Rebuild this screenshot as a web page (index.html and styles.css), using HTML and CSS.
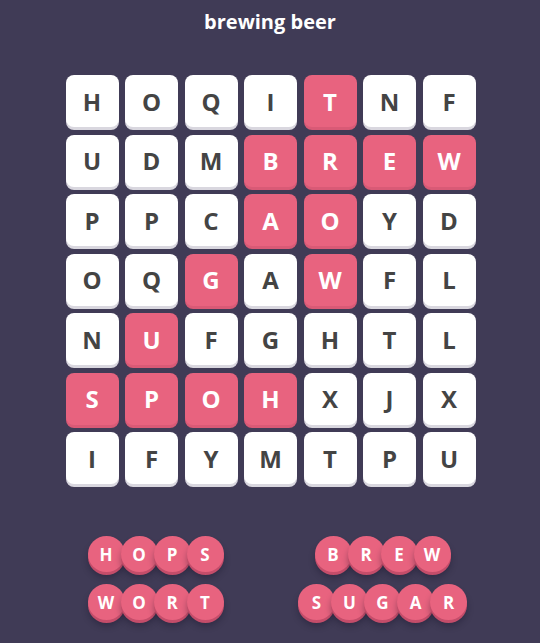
FILE: index.html
```html
<!DOCTYPE html>
<html lang="en">
  <head>
    <meta charset="UTF-8" />
    <meta name="viewport" content="width=device-width, initial-scale=1.0" />
    <title>Word Search</title>
    <link rel="stylesheet" href="styles.css">
  </head>
  <body>
    <div class="game">
      <h1 class="topic">brewing beer</h1>

      <ul class="board">
        <li class="tile">H</li>
        <li class="tile">O</li>
        <li class="tile">Q</li>
        <li class="tile">I</li>
        <li class="tile found">T</li>
        <li class="tile">N</li>
        <li class="tile">F</li>

        <li class="tile">U</li>
        <li class="tile">D</li>
        <li class="tile">M</li>
        <li class="tile found">B</li>
        <li class="tile found">R</li>
        <li class="tile found">E</li>
        <li class="tile found">W</li>

        <li class="tile">P</li>
        <li class="tile">P</li>
        <li class="tile">C</li>
        <li class="tile found">A</li>
        <li class="tile found">O</li>
        <li class="tile">Y</li>
        <li class="tile">D</li>

        <li class="tile">O</li>
        <li class="tile">Q</li>
        <li class="tile found">G</li>
        <li class="tile">A</li>
        <li class="tile found">W</li>
        <li class="tile">F</li>
        <li class="tile">L</li>

        <li class="tile">N</li>
        <li class="tile found">U</li>
        <li class="tile">F</li>
        <li class="tile">G</li>
        <li class="tile">H</li>
        <li class="tile">T</li>
        <li class="tile">L</li>

        <li class="tile found">S</li>
        <li class="tile found">P</li>
        <li class="tile found">O</li>
        <li class="tile found">H</li>
        <li class="tile">X</li>
        <li class="tile">J</li>
        <li class="tile">X</li>

        <li class="tile">I</li>
        <li class="tile">F</li>
        <li class="tile">Y</li>
        <li class="tile">M</li>
        <li class="tile">T</li>
        <li class="tile">P</li>
        <li class="tile">U</li>
      </ul>

      <div class="words">
        <div class="word"><span>H</span><span>O</span><span>P</span><span>S</span></div>
        <div class="word"><span>B</span><span>R</span><span>E</span><span>W</span></div>
        <div class="word"><span>W</span><span>O</span><span>R</span><span>T</span></div>
        <div class="word"><span>S</span><span>U</span><span>G</span><span>A</span><span>R</span></div>
      </div>
    </div>
  </body>
</html>
```

FILE: styles.css
```css
* {
  margin: 0;
  padding: 0;
  box-sizing: border-box;
  font-family: "Open Sans", sans-serif;
}
body {
  background: #403b56;
  min-height: 100vh;
}
.game {
  display: flex;
  flex-direction: column;
  align-items: center;
  padding-top: 8px;
}
.topic {
  color: #fff;
  font-size: 20px;
  font-weight: 700;
  line-height: 28px;
}
.board {
  display: grid;
  grid-template-columns: repeat(7, 53px);
  grid-auto-rows: 52px;
  gap: 7.5px 6.5px;
  margin-top: 39px;
  margin-left: 1px;
  list-style: none;
}
.tile {
  display: flex;
  align-items: center;
  justify-content: center;
  background: #fff;
  color: #444;
  font-size: 24px;
  font-weight: 700;
  border-radius: 8px;
  box-shadow: 0 3px 0 #d9d7df;
}
.tile.found {
  background: #e8637f;
  color: #fff;
  box-shadow: 0 3px 0 #d95a76;
}
.words {
  display: grid;
  grid-template-columns: 227px 227px;
  justify-items: center;
  row-gap: 12px;
  margin-top: 52px;
  margin-left: -2px;
}
.word {
  display: flex;
}
.word span {
  width: 37px;
  height: 36px;
  display: flex;
  align-items: center;
  justify-content: center;
  border-radius: 50%;
  background: #e8637f;
  color: #fff;
  font-size: 17px;
  font-weight: 700;
  box-shadow: 0 3px 0 #c44d6a, 0 6px 6px rgba(20, 16, 36, 0.35);
}
.word span + span {
  margin-left: -4px;
}
```
